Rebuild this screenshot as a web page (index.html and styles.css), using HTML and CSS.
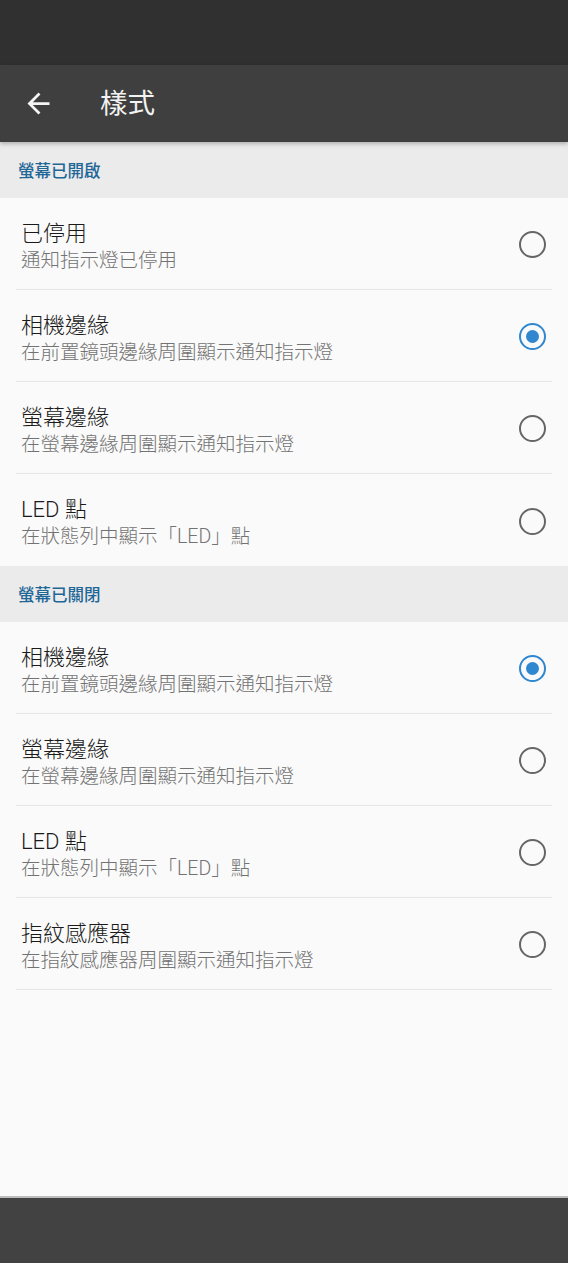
FILE: index.html
```html
<!DOCTYPE html>
<html lang="zh-Hant">
<head>
  <meta charset="UTF-8">
  <meta name="viewport" content="width=device-width, initial-scale=1.0">
  <title>樣式</title>
  <link rel="stylesheet" href="styles.css">
</head>
<body>
  <div class="screen">
    <div class="status-bar"></div>
    <div class="app-bar">
      <button class="back" aria-label="返回">
        <svg width="33" height="33" viewBox="0 0 24 24"><path d="M20 11H7.83l5.59-5.59L12 4l-8 8 8 8 1.41-1.41L7.83 13H20v-2z" fill="#f5f5f5"/></svg>
      </button>
      <h1>樣式</h1>
    </div>

    <div class="content">
      <div class="section-header">螢幕已開啟</div>
      <div class="option">
        <div class="text">
          <div class="title">已停用</div>
          <div class="summary">通知指示燈已停用</div>
        </div>
        <span class="radio"></span>
      </div>
      <div class="option">
        <div class="text">
          <div class="title">相機邊緣</div>
          <div class="summary">在前置鏡頭邊緣周圍顯示通知指示燈</div>
        </div>
        <span class="radio checked"></span>
      </div>
      <div class="option">
        <div class="text">
          <div class="title">螢幕邊緣</div>
          <div class="summary">在螢幕邊緣周圍顯示通知指示燈</div>
        </div>
        <span class="radio"></span>
      </div>
      <div class="option last">
        <div class="text">
          <div class="title">LED 點</div>
          <div class="summary">在狀態列中顯示「LED」點</div>
        </div>
        <span class="radio"></span>
      </div>

      <div class="section-header">螢幕已關閉</div>
      <div class="option">
        <div class="text">
          <div class="title">相機邊緣</div>
          <div class="summary">在前置鏡頭邊緣周圍顯示通知指示燈</div>
        </div>
        <span class="radio checked"></span>
      </div>
      <div class="option">
        <div class="text">
          <div class="title">螢幕邊緣</div>
          <div class="summary">在螢幕邊緣周圍顯示通知指示燈</div>
        </div>
        <span class="radio"></span>
      </div>
      <div class="option">
        <div class="text">
          <div class="title">LED 點</div>
          <div class="summary">在狀態列中顯示「LED」點</div>
        </div>
        <span class="radio"></span>
      </div>
      <div class="option">
        <div class="text">
          <div class="title">指紋感應器</div>
          <div class="summary">在指紋感應器周圍顯示通知指示燈</div>
        </div>
        <span class="radio"></span>
      </div>
    </div>

    <div class="nav-bar"></div>
  </div>
</body>
</html>
```

FILE: styles.css
```css
* {
  box-sizing: border-box;
}
html, body {
  margin: 0;
  padding: 0;
}
body {
  font-family: Roboto, "Noto Sans CJK TC", sans-serif;
  background: #fafafa;
}
.screen {
  display: flex;
  flex-direction: column;
  height: 1263px;
  overflow: hidden;
}
.status-bar {
  height: 65px;
  background: #303030;
}
.app-bar {
  height: 77px;
  background: #3f3f3f;
  display: flex;
  align-items: center;
  box-shadow: 0 2px 4px rgba(0,0,0,0.25);
  position: relative;
  z-index: 1;
}
.back {
  background: none;
  border: none;
  padding: 0;
  margin-left: 22px;
  width: 33px;
  height: 33px;
  display: flex;
}
.app-bar h1 {
  margin: 0 0 0 45px;
  font-size: 27.5px;
  font-weight: 400;
  color: #f2f2f2;
  line-height: 1;
}
.content {
  flex: 1;
}
.section-header {
  height: 56px;
  background: #ebebeb;
  display: flex;
  align-items: center;
  padding-left: 18px;
  font-size: 16.5px;
  font-weight: 500;
  color: #1f6796;
}
.option {
  height: 92px;
  margin: 0 16px;
  border-bottom: 1px solid #e6e6e6;
  display: flex;
  align-items: center;
  padding: 5px 0 0 5px;
}
.option.last {
  border-bottom: none;
}
.text {
  flex: 1;
}
.title {
  font-size: 22px;
  line-height: 29px;
  font-weight: 300;
  color: #1a1a1a;
}
.summary {
  font-size: 19.5px;
  line-height: 26px;
  font-weight: 300;
  color: #737373;
}
.radio {
  width: 27px;
  height: 27px;
  border: 2.7px solid #666;
  border-radius: 50%;
  margin: -3px 6px 0 0;
  display: flex;
  align-items: center;
  justify-content: center;
}
.radio.checked {
  border-color: #2f87cf;
}
.radio.checked::after {
  content: "";
  width: 13px;
  height: 13px;
  border-radius: 50%;
  background: #2f87cf;
}
.nav-bar {
  height: 67px;
  background: #424242;
  border-top: 2px solid #bdbdbd;
}
```
